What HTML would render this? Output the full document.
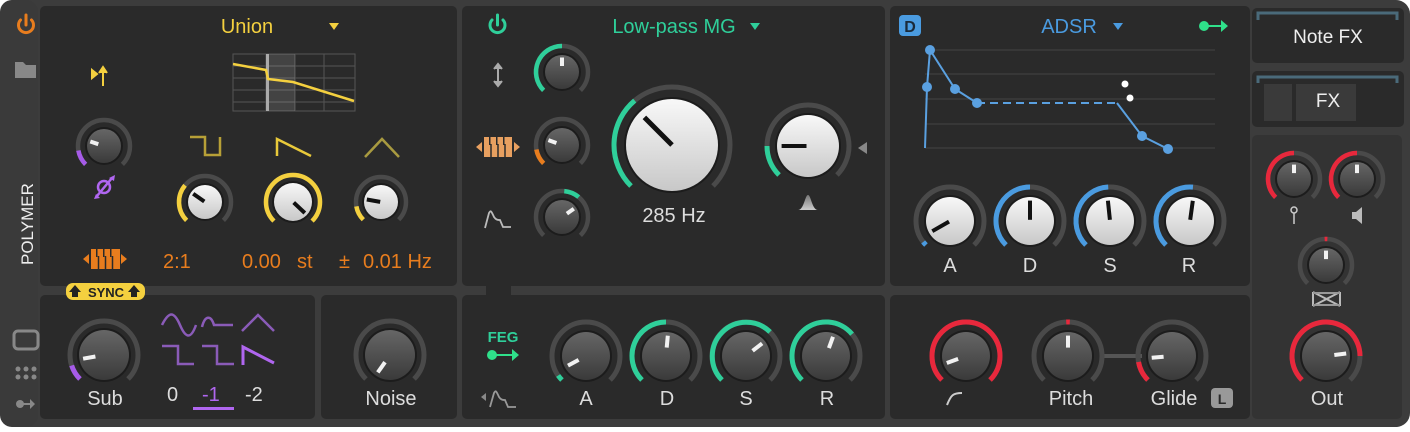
<!DOCTYPE html>
<html><head><meta charset="utf-8"><style>
html,body{margin:0;padding:0;background:#fff;}
body{width:1410px;height:427px;overflow:hidden;font-family:"Liberation Sans",sans-serif;}
svg text{font-family:"Liberation Sans",sans-serif;}
</style></head><body>
<svg id="s" width="1410" height="427" viewBox="0 0 1410 427" xmlns="http://www.w3.org/2000/svg">
<defs>
<linearGradient id="gd" x1="0" y1="0" x2="0" y2="1"><stop offset="0" stop-color="#666"/><stop offset="1" stop-color="#3a3a3a"/></linearGradient>
<linearGradient id="gw" x1="0" y1="0" x2="0" y2="1"><stop offset="0" stop-color="#f8f8f8"/><stop offset="1" stop-color="#c8c8c8"/></linearGradient>
<linearGradient id="gb" x1="0" y1="0" x2="0" y2="1"><stop offset="0" stop-color="#777"/><stop offset="1" stop-color="#ccc"/></linearGradient>
</defs>
<rect x="0" y="0" width="1410" height="427" rx="14" fill="#3c3c3c"/>
<rect x="0" y="0" width="38" height="427" rx="12" fill="#3a3a3a"/>
<g fill="#2a2a2a">
<rect x="40" y="6" width="417" height="280" rx="5"/>
<rect x="462" y="6" width="423" height="280" rx="5"/>
<rect x="890" y="6" width="360" height="280" rx="5"/>
<rect x="40" y="295" width="275" height="124" rx="5"/>
<rect x="321" y="295" width="136" height="124" rx="5"/>
<rect x="462" y="295" width="423" height="124" rx="5"/>
<rect x="890" y="295" width="360" height="124" rx="5"/>
<rect x="1252" y="8" width="152" height="55" rx="5"/>
<rect x="1252" y="71" width="152" height="56" rx="5"/>
</g>
<rect x="1252" y="135" width="150" height="284" rx="5" fill="#333"/>
<rect x="486" y="286" width="25" height="9" fill="#2a2a2a"/>
<path d="M1258 20 V13 H1397 V20" stroke="#4a6a7a" stroke-width="3" fill="none"/>
<text x="1328" y="43" fill="#eee" font-size="19" text-anchor="middle">Note FX</text>
<path d="M1258 83 V77 H1397 V83" stroke="#4a6a7a" stroke-width="3" fill="none"/>
<rect x="1264" y="84" width="28" height="37" fill="#3a3a3a"/>
<rect x="1296" y="84" width="60" height="37" fill="#3a3a3a"/>
<text x="1328" y="107" fill="#eee" font-size="19" text-anchor="middle">FX</text>
<g fill="none" stroke="#e87d1e" stroke-width="3" stroke-linecap="round"><path d="M20.5 20 A7.5 7.5 0 1 0 31.5 20"/><path d="M26 15 V25"/></g>
<path d="M15 62 h8 l3 3 h10 v13 h-21z" fill="#888"/>
<text transform="translate(33,265) rotate(-90)" fill="#eee" font-size="17">POLYMER</text>
<rect x="14" y="331" width="24" height="18" rx="4" fill="none" stroke="#888" stroke-width="3"/>
<g fill="#888"><circle cx="18" cy="369" r="2.5"/><circle cx="26" cy="369" r="2.5"/><circle cx="34" cy="369" r="2.5"/><circle cx="18" cy="377" r="2.5"/><circle cx="26" cy="377" r="2.5"/><circle cx="34" cy="377" r="2.5"/>
<circle cx="20" cy="404" r="4"/><path d="M20 403 h13 v2 h-13z M30 399 l5 5 -5 5z"/></g>
<text x="247" y="33" fill="#f4d03f" font-size="20" text-anchor="middle">Union</text>
<path d="M329 23 h10 l-5 7z" fill="#f4d03f"/>
<path d="M92 70 l5 4 -5 4z M103 86 V68 M99 73 l4 -6 4 6" fill="#f4d03f" stroke="#f4d03f" stroke-width="2"/>
<g stroke="#555" stroke-width="1" fill="none"><rect x="233" y="54" width="122" height="57"/><path d="M233 66 H355 M233 78 H355 M233 90 H355 M233 102 H355 M266 54 V111 M295 54 V111 M324 54 V111"/></g>
<rect x="269" y="54" width="26" height="57" fill="#fff" opacity="0.12"/>
<rect x="266" y="54" width="3" height="57" fill="#aaa"/>
<path d="M233 64 L266 70 L268 79 L293 82 L354 101" stroke="#f4d03f" stroke-width="2.5" fill="none"/>
<path d="M190 137 h15 v18 h15 v-18" stroke="#b7a037" stroke-width="2.5" fill="none"/>
<path d="M277 156 v-17 l34 17" stroke="#e8c93a" stroke-width="2.5" fill="none"/>
<path d="M365 157 l17 -18 17 18" stroke="#a89a40" stroke-width="2.5" fill="none"/>
<!-- phase icon -->
<g stroke="#b066f0" stroke-width="2.5" fill="none"><circle cx="104" cy="187" r="6"/><path d="M97 196 L112 178"/></g>
<path d="M109 178 l6 -3 -1 6z M96 194 l-2 5 6 -1z" fill="#b066f0"/>
<!-- piano orange -->
<g fill="#e87d1e"><path d="M83 259 l6 -5 v10z M127 259 l-6 -5 v10z"/><rect x="91" y="249" width="29" height="20"/></g>
<g stroke="#2a2a2a" stroke-width="1.5"><path d="M98.5 256 V269 M105.5 256 V269 M112.5 256 V269"/></g>
<g fill="#2a2a2a"><rect x="96" y="249" width="1.5" height="8"/><rect x="103" y="249" width="1.5" height="8"/><rect x="110" y="249" width="1.5" height="8"/></g>
<g fill="#e87d1e" font-size="20"><text x="163" y="268">2:1</text><text x="242" y="268">0.00</text><text x="297" y="268">st</text><text x="339" y="268">±</text><text x="363" y="268">0.01 Hz</text></g>
<rect x="66" y="283" width="79" height="17" rx="7" fill="#f4d03f"/>
<text x="106" y="297" fill="#222" font-size="13" font-weight="bold" text-anchor="middle">SYNC</text>
<path d="M69 292 l6 -7 6 7 h-3 v5 h-6 v-5z M128 292 l6 -7 6 7 h-3 v5 h-6 v-5z" fill="#222"/>
<g stroke="#8a5bb8" stroke-width="2.5" fill="none"><path d="M162 325 c7 -14 12 -14 18 0 s11 14 16 0"/><path d="M202 327 c3 -12 9 -12 12 -2 h19"/><path d="M242 331 l16 -16 16 16"/><path d="M162 346 h16 v18 h16"/><path d="M202 346 h15 v18 h17"/></g>
<path d="M243 365 v-18 l31 16" stroke="#b066f0" stroke-width="3" fill="none"/>
<g font-size="20" fill="#ddd"><text x="167" y="401">0</text><text x="202" y="401" fill="#b066f0">-1</text><text x="245" y="401">-2</text></g>
<rect x="193" y="407" width="41" height="3" fill="#b066f0"/>
<text x="105" y="405" fill="#ddd" font-size="20" text-anchor="middle">Sub</text>
<text x="391" y="405" fill="#ddd" font-size="20" text-anchor="middle">Noise</text>
<g fill="none" stroke="#2fcf9a" stroke-width="3" stroke-linecap="round"><path d="M492 20 A7.5 7.5 0 1 0 503 20"/><path d="M497.5 15 V25"/></g>
<text x="674" y="33" fill="#2fcf9a" font-size="20" text-anchor="middle">Low-pass MG</text>
<path d="M750 23 h10 l-5 7z" fill="#2fcf9a"/>
<path d="M498 65 v20 M494 69 l4 -5 4 5 M494 81 l4 5 4 -5" stroke="#aaa" stroke-width="2" fill="#aaa"/>
<g fill="#e8a060"><path d="M476 147 l6 -5 v10z M520 147 l-6 -5 v10z"/><rect x="484" y="137" width="28" height="20"/></g>
<g stroke="#2a2a2a" stroke-width="1.5"><path d="M491 144 V157 M498 144 V157 M505 144 V157"/></g>
<g fill="#2a2a2a"><rect x="489" y="137" width="1.5" height="8"/><rect x="496" y="137" width="1.5" height="8"/><rect x="503" y="137" width="1.5" height="8"/></g>
<path d="M485 228 l4 -15 c2 -4 3 0 5 4 c2 3 4 3 6 3 l3 7 h8" stroke="#bbb" stroke-width="1.8" fill="none"/>
<text x="674" y="222" fill="#ddd" font-size="20" text-anchor="middle">285 Hz</text>
<path d="M858 148 l9 -6 v12z" fill="#888"/>
<path d="M798 210 c6 0 7 -15 10 -15 s4 15 10 15z" fill="url(#gb)"/>
<text x="503" y="342" fill="#2fcf9a" font-size="15" font-weight="bold" text-anchor="middle">FEG</text>
<circle cx="492" cy="355" r="5" fill="#2fe08a"/><path d="M492 354 h24 v2 h-24z M512 349 l7 6 -7 6z" fill="#2fe08a"/>
<path d="M481 397 l5 -4 v8z" fill="#888"/><path d="M490 407 l4 -14 c2 -4 3 0 5 4 c2 3 4 3 6 3 l3 7 h8" stroke="#999" stroke-width="1.8" fill="none"/>
<g fill="#ddd" font-size="20" text-anchor="middle"><text x="586" y="405">A</text><text x="667" y="405">D</text><text x="746" y="405">S</text><text x="827" y="405">R</text></g>
<rect x="899" y="15" width="22" height="21" rx="4" fill="#4a9be0"/>
<text x="910" y="32" fill="#1a2a3a" font-size="16" font-weight="bold" text-anchor="middle">D</text>
<text x="1069" y="33" fill="#4a9be0" font-size="20" text-anchor="middle">ADSR</text>
<path d="M1113 23 h10 l-5 7z" fill="#4a9be0"/>
<circle cx="1204" cy="26" r="5" fill="#2fe08a"/><path d="M1204 25 h20 v2 h-20z M1221 20 l7 6 -7 6z" fill="#2fe08a"/>
<g stroke="#444" stroke-width="1"><path d="M925 50 H1215 M925 74 H1215 M925 99 H1215 M925 124 H1215 M925 148 H1215"/></g>
<path d="M925 148 L927 87 L930 50 L955 89 L977 103" stroke="#5aa0e0" stroke-width="2" fill="none"/>
<path d="M977 103 H1117" stroke="#5aa0e0" stroke-width="2" stroke-dasharray="8 5" fill="none"/>
<path d="M1117 103 L1142 136 L1168 149" stroke="#5aa0e0" stroke-width="2" fill="none"/>
<g fill="#5aa0e0"><circle cx="927" cy="87" r="5"/><circle cx="930" cy="50" r="5"/><circle cx="955" cy="89" r="5"/><circle cx="977" cy="103" r="5"/><circle cx="1142" cy="136" r="5"/><circle cx="1168" cy="149" r="5"/></g>
<circle cx="1125" cy="84" r="3.5" fill="#fff"/><circle cx="1130" cy="98" r="3.5" fill="#fff"/>
<g fill="#ddd" font-size="20" text-anchor="middle"><text x="950" y="272">A</text><text x="1030" y="272">D</text><text x="1110" y="272">S</text><text x="1189" y="272">R</text></g>
<path d="M1100 356 H1142" stroke="#555" stroke-width="4"/>
<path d="M947 405 c4 -10 6 -12 15 -12" stroke="#ccc" stroke-width="2" fill="none"/>
<text x="1071" y="405" fill="#ddd" font-size="20" text-anchor="middle">Pitch</text>
<text x="1174" y="405" fill="#ddd" font-size="20" text-anchor="middle">Glide</text>
<rect x="1211" y="388" width="22" height="20" rx="4" fill="#999"/>
<text x="1222" y="404" fill="#2a2a2a" font-size="14" font-weight="bold" text-anchor="middle">L</text>
<circle cx="1294" cy="210" r="3" fill="none" stroke="#ccc" stroke-width="1.5"/><path d="M1294 213 v11" stroke="#ccc" stroke-width="1.5"/>
<path d="M1352 212 h4 l6 -5 v17 l-6 -5 h-4z" fill="#bbb"/>
<path d="M1313 292 l27 14 M1340 292 l-27 14 M1313 292 v14 M1340 292 v14" stroke="#bbb" stroke-width="2" fill="none"/>
<path d="M1313 292 h27 v2 h-27z M1313 304 h27 v2 h-27z" fill="#999"/>
<text x="1327" y="405" fill="#ddd" font-size="20" text-anchor="middle">Out</text>
<g id="knobs"></g>
</svg>
<script>
var K=[
[104,146,26,17,0,'#a65be8',-135,-100,-72],
[205,202,26,17,1,'#f4d03f',-135,-50,-55],
[293,202,27,19,1,'#f4d03f',-135,135,133],
[381,202,25,17,1,'#f4d03f',-135,-100,-80],
[104,355,34,25,0,'#a65be8',-135,-108,-100],
[390,355,34,25,0,null,0,0,-145],
[562,72,26,17,0,'#2fcf9a',-135,0,0],
[562,145,26,17,0,'#e87d1e',-135,-100,-70],
[562,217,26,17,0,'#2fcf9a',5,40,55],
[672,145,58,46,1,'#2fcf9a',-135,-40,-45],
[808,146,41,31,1,'#2fcf9a',-135,-90,-90],
[586,356,34,24,0,'#2fcf9a',-135,-125,-118],
[666,356,34,24,0,'#2fcf9a',-135,0,5],
[746,356,34,24,0,'#2fcf9a',-135,45,52],
[826,356,34,24,0,'#2fcf9a',-135,50,20],
[950,221,34,24,1,'#4a9be0',-135,-128,-120],
[1030,221,34,24,1,'#4a9be0',-135,0,0],
[1110,221,34,24,1,'#4a9be0',-135,-3,-6],
[1190,221,34,24,1,'#4a9be0',-135,5,8],
[966,356,34,24,0,'#e8283c',-135,135,-110],
[1068,356,34,24,0,'#e8283c',-3,3,0],
[1172,356,34,24,0,'#e8283c',-135,-100,-95],
[1294,179,26,17,0,'#e8283c',-135,0,0],
[1357,179,26,17,0,'#e8283c',-135,0,0],
[1326,265,26,17,0,'#e8283c',-3,3,0],
[1326,356,34,24,0,'#e8283c',-135,90,83]
];
function pt(x,y,r,a){a=a*Math.PI/180;return [x+r*Math.sin(a),y-r*Math.cos(a)];}
function arc(x,y,r,a0,a1){var p=pt(x,y,r,a0),q=pt(x,y,r,a1);return 'M'+p[0].toFixed(2)+' '+p[1].toFixed(2)+' A'+r+' '+r+' 0 '+((a1-a0)>180?1:0)+' 1 '+q[0].toFixed(2)+' '+q[1].toFixed(2);}
var h='';
K.forEach(function(k){
 var x=k[0],y=k[1],R=k[2],b=k[3],w=k[4],sw=R>30?5:4.5;
 h+='<path d="'+arc(x,y,R,-135,135)+'" stroke="#4a4a4a" stroke-width="'+sw+'" fill="none"/>';
 if(k[5])h+='<path d="'+arc(x,y,R,k[6],k[7])+'" stroke="'+k[5]+'" stroke-width="'+sw+'" fill="none"/>';
 h+='<circle cx="'+x+'" cy="'+y+'" r="'+(b+2)+'" fill="#1c1c1c"/>';
 h+='<circle cx="'+x+'" cy="'+y+'" r="'+b+'" fill="url(#'+(w?'gw':'gd')+')"/>';
 var p0=pt(x,y,w?b*0.05:b*0.35,k[8]),p1=pt(x,y,b*0.85,k[8]);
 if(w&&R>50)p0=[x,y];
 h+='<path d="M'+p0[0].toFixed(1)+' '+p0[1].toFixed(1)+' L'+p1[0].toFixed(1)+' '+p1[1].toFixed(1)+'" stroke="'+(w?'#111':'#f2f2f2')+'" stroke-width="'+(R>50?5:4)+'"/>';
});
document.getElementById('knobs').innerHTML=h;
</script>
</body></html>
